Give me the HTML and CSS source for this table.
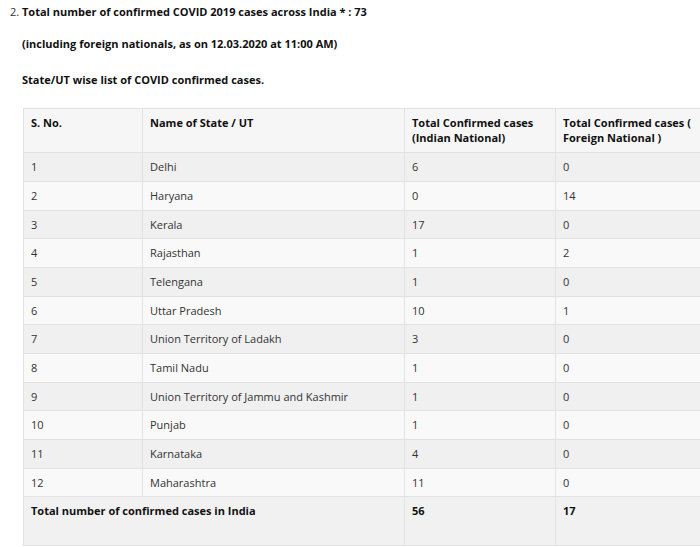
FILE: index.html
```html
<!DOCTYPE html>
<html>
<head>
<meta charset="utf-8">
<link rel="stylesheet" href="styles.css">
</head>
<body>
<div class="page">
  <ol class="list" start="2">
    <li><strong>Total number of confirmed COVID 2019 cases across India * : 73</strong></li>
  </ol>
  <p class="note"><strong>(including foreign nationals, as on 12.03.2020 at 11:00 AM)</strong></p>
  <p class="note second"><strong>State/UT wise list of COVID confirmed cases.</strong></p>
  <table class="cases">
    <colgroup>
      <col class="c1"><col class="c2"><col class="c3"><col class="c4">
    </colgroup>
    <thead>
      <tr><th>S. No.</th><th>Name of State / UT</th><th>Total Confirmed cases (Indian National)</th><th>Total Confirmed cases ( Foreign National )</th></tr>
    </thead>
    <tbody>
      <tr><td>1</td><td>Delhi</td><td>6</td><td>0</td></tr>
      <tr><td>2</td><td>Haryana</td><td>0</td><td>14</td></tr>
      <tr><td>3</td><td>Kerala</td><td>17</td><td>0</td></tr>
      <tr><td>4</td><td>Rajasthan</td><td>1</td><td>2</td></tr>
      <tr><td>5</td><td>Telengana</td><td>1</td><td>0</td></tr>
      <tr><td>6</td><td>Uttar Pradesh</td><td>10</td><td>1</td></tr>
      <tr><td>7</td><td>Union Territory of Ladakh</td><td>3</td><td>0</td></tr>
      <tr><td>8</td><td>Tamil Nadu</td><td>1</td><td>0</td></tr>
      <tr><td>9</td><td>Union Territory of Jammu and Kashmir</td><td>1</td><td>0</td></tr>
      <tr><td>10</td><td>Punjab</td><td>1</td><td>0</td></tr>
      <tr><td>11</td><td>Karnataka</td><td>4</td><td>0</td></tr>
      <tr><td>12</td><td>Maharashtra</td><td>11</td><td>0</td></tr>
      <tr class="total"><td colspan="2"><strong>Total number of confirmed cases in India</strong></td><td><strong>56</strong></td><td><strong>17</strong></td></tr>
    </tbody>
  </table>
</div>
</body>
</html>
```
FILE: styles.css
```css
html, body {
  margin: 0;
  padding: 0;
  background: #fff;
}
body {
  font-family: "Open Sans", "Liberation Sans", sans-serif;
  font-size: 11px;
  color: #333;
  overflow: hidden;
}
.page {
  padding: 0 0 0 8px;
}
.list {
  margin: 0;
  padding: 4px 0 0 14px;
  color: #333;
}
.list li {
  line-height: 16px;
}
.list strong, .note strong {
  color: #111;
}
.note {
  margin: 16px 0 0 14px;
  line-height: 16px;
}
.note.second {
  margin-top: 20px;
}
.cases {
  margin: 20px 0 0 15px;
  border-collapse: collapse;
  width: 680px;
  table-layout: fixed;
}
.c1 { width: 119px; }
.c2 { width: 262px; }
.c3 { width: 151px; }
.c4 { width: 148px; }
.cases th, .cases td {
  border: 1px solid #e2e2e2;
  text-align: left;
  vertical-align: top;
  padding: 6px 7px;
  line-height: 15px;
}
.cases th {
  font-weight: bold;
  color: #111;
  background: #f6f6f6;
  height: 30px;
  padding-top: 6px;
  padding-bottom: 7px;
}
.cases td {
  padding-top: 6px;
  padding-bottom: 7px;
}
.cases tbody tr:nth-child(3n) td {
  padding-bottom: 6px;
}
.cases tbody tr:nth-child(odd) td { background: #f0f0f0; }
.cases tbody tr:nth-child(even) td { background: #f9f9f9; }
.cases tbody tr.total td {
  background: #f1f1f1;
  height: 35px;
  padding-bottom: 7px;
  color: #111;
}
```
